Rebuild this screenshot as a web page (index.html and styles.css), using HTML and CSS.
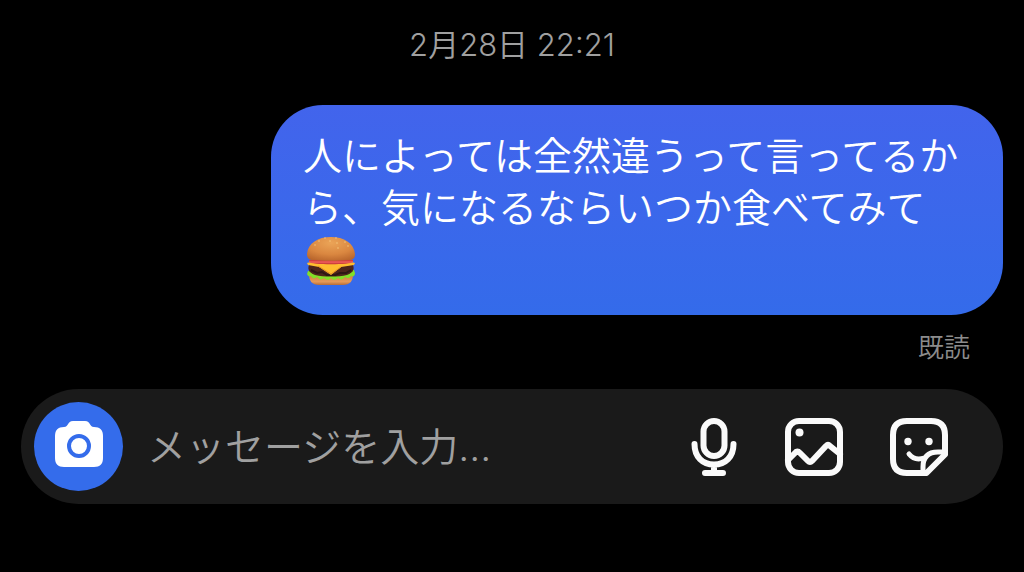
FILE: index.html
```html
<!DOCTYPE html>
<html lang="ja">
<head>
<meta charset="utf-8">
<meta name="viewport" content="width=device-width, initial-scale=1">
<title>メッセージ</title>
<link rel="stylesheet" href="styles.css">
</head>
<body>
<main class="chat">
  <time class="timestamp">2月28日 22:21</time>
  <section class="message">
    <p class="bubble">人によっては全然違うって言ってるから、気になるならいつか食べてみて<svg class="emoji" viewBox="0 0 50 50" role="img" aria-label="ハンバーガー">
      <defs>
        <radialGradient id="bun" cx=".5" cy=".25" r=".8"><stop offset="0" stop-color="#eba457"/><stop offset=".6" stop-color="#da8740"/><stop offset="1" stop-color="#b8652c"/></radialGradient>
        <linearGradient id="base" x1="0" y1="0" x2="0" y2="1"><stop offset="0" stop-color="#cf7c3b"/><stop offset=".7" stop-color="#e69a58"/><stop offset="1" stop-color="#b96c35"/></linearGradient>
        <linearGradient id="tomato" x1="0" y1="0" x2="0" y2="1"><stop offset="0" stop-color="#c92f35"/><stop offset=".5" stop-color="#f0625d"/><stop offset="1" stop-color="#bd2d2e"/></linearGradient>
      </defs>
      <path d="M3 38h44c0 7-3 11-10 11H13C6 49 3 45 3 38z" fill="url(#base)"/>
      <path d="M2 35l-1 3c1 2 2 3 4 2 1 3 4 3 6 1 2 3 5 3 7 1 2 2 5 3 7 0 2 3 5 2 7 0 2 2 5 2 7-1 2 2 5 1 6-1 2 1 4 0 4-3l-1-3z" fill="#82df27"/>
      <path d="M3 29h44c2 5-1 8-6 10-9 2-23 2-32 0-5-2-8-5-6-10z" fill="#4d251c"/>
      <path d="M5 34l6 3 5-1 5 3h8l5-2 6 0 5-3" fill="none" stroke="#2e1714" stroke-width="2"/>
      <path d="M1 27c8-3 40-3 48 0l-1 2-13 2-10 8-12-8-11-2z" fill="#ffbd2f"/>
      <path d="M12 30l13 8 10-7" fill="none" stroke="#e79420"/>
      <path d="M3 24h44v2c-1 3-43 3-44 0z" fill="url(#tomato)"/>
      <path d="M1 18C2 7 12 1 25 1s23 6 24 17c0 4-2 6-6 6-10 1-26 1-36 0-4 0-6-2-6-6z" fill="url(#bun)"/>
      <g fill="#f3c67c"><circle cx="19" cy="2" r=".8"/><circle cx="30" cy="2" r=".8"/><circle cx="13" cy="5" r=".8"/><circle cx="24" cy="5" r=".8"/><circle cx="31" cy="7" r=".8"/><circle cx="39" cy="6" r=".8"/><circle cx="9" cy="9" r=".8"/><circle cx="32" cy="12" r=".8"/><circle cx="42" cy="10" r=".8"/></g>
    </svg></p>
    <p class="receipt">既読</p>
  </section>
  <form class="composer">
    <button class="camera" type="button" aria-label="カメラ">
      <svg class="camera-icon" viewBox="0 0 50 54" aria-hidden="true">
        <path d="M19 1h12c6 0 4 6 9 6 6 0 9 3 9 9v22c0 6-3 9-9 9H10c-6 0-9-3-9-9V16c0-6 3-9 9-9 5 0 3-6 9-6z" fill="#fff"/>
        <circle cx="25" cy="26" r="10" fill="none" stroke="#346ceb" stroke-width="4"/>
      </svg>
    </button>
    <input class="field" type="text" placeholder="メッセージを入力..." aria-label="メッセージを入力">
    <div class="actions">
      <button class="action" type="button" aria-label="音声メッセージ">
        <svg class="icon icon-mic" viewBox="5 0 50 60" aria-hidden="true">
          <rect x="19.500" y="4" width="21" height="35" rx="10.500"/>
          <path d="M10.500 27c0 13 8 20.500 19.500 20.500S49.500 40 49.500 27M30 48v8M21 56h18"/>
        </svg>
      </button>
      <button class="action" type="button" aria-label="写真">
        <svg class="icon" viewBox="0 0 60 60" aria-hidden="true">
          <rect x="4" y="4" width="52" height="52" rx="11"/>
          <path d="M4 43l8-8q2-1 4 1l8 8q2 2 4 0l14-15q2-2 4 0l10 8"/>
          <circle class="dot" cx="15.500" cy="15.500" r="4"/>
        </svg>
      </button>
      <button class="action" type="button" aria-label="スタンプ">
        <svg class="icon" viewBox="0 0 60 60" aria-hidden="true">
          <path d="M18 4h24q14 0 14 14v19.500L37.500 56H18Q4 56 4 42V18Q4 4 18 4z"/>
          <path class="fold" d="M34 55v-5q0-15 15-15h7M20 37c4 5 9 6 15 4"/>
          <circle class="dot" cx="19" cy="24.500" r="3.700"/>
          <circle class="dot" cx="40" cy="24.500" r="3.700"/>
        </svg>
      </button>
    </div>
  </form>
</main>
</body>
</html>
```
FILE: styles.css
```css
* { box-sizing: border-box; }

body {
  margin: 0;
  background: #000;
  color: #fff;
  font-family: Inter, "Noto Sans CJK JP", sans-serif;
  font-weight: 350;
}

.chat {
  display: flex;
  flex-direction: column;
  padding: 25px 21px 68px;
}

.timestamp {
  align-self: center;
  margin-bottom: 40px;
  color: #a0a0a0;
  font-size: 31px;
  line-height: 40px;
}

.message {
  display: flex;
  flex-direction: column;
  align-items: flex-end;
}

.bubble {
  max-width: 732px;
  margin: 0;
  padding: 25px 32px 29px;
  border-radius: 52px;
  background: linear-gradient(#4264ec, #346bea);
  font-size: 39px;
  line-height: 52px;
}

.emoji {
  display: inline-block;
  width: 56px;
  height: 50px;
  vertical-align: -12px;
}

.receipt {
  margin: 13px 33px 21px;
  color: #8c8c8c;
  font-size: 26px;
  line-height: 40px;
}

.composer {
  display: flex;
  align-items: center;
  gap: 24px;
  padding: 13px 54px 13px 13px;
  border-radius: 58px;
  background: #1a1a1a;
}

.camera {
  display: grid;
  flex: none;
  place-items: center;
  width: 89px;
  height: 89px;
  padding: 0;
  border: 0;
  border-radius: 50%;
  background: #346ceb;
}

.camera-icon {
  width: 50px;
  height: 54px;
}

.field {
  flex: 1;
  min-width: 0;
  padding: 0;
  border: 0;
  outline: 0;
  background: transparent;
  color: #fff;
  font: inherit;
  font-size: 39px;
  line-height: 52px;
}

.field::placeholder {
  color: #a0a0a0;
  opacity: 1;
}

.actions {
  display: flex;
  gap: 45px;
}

.action {
  display: grid;
  padding: 0;
  border: 0;
  background: transparent;
}

.icon {
  width: 60px;
  height: 60px;
  fill: none;
  stroke: #fafafa;
  stroke-width: 6;
  stroke-linecap: round;
  stroke-linejoin: round;
}

.icon-mic {
  width: 50px;
}

.icon .fold {
  stroke-width: 5;
}

.icon .dot {
  fill: #fafafa;
  stroke: none;
}
```
